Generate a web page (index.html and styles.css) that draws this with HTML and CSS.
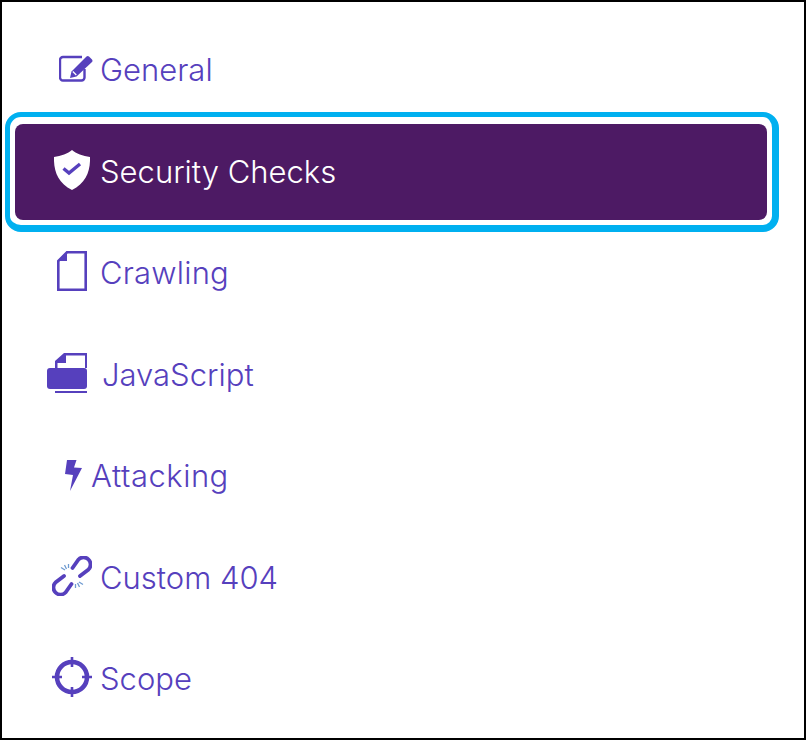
FILE: index.html
```html
<!DOCTYPE html>
<html lang="en">
<head>
    <meta charset="UTF-8">
    <title>Scan settings</title>
    <link rel="stylesheet" href="styles.css">
</head>
<body>
<nav class="side-menu">
    <a href="#" class="menu-item item-general">
        <svg class="icon" viewBox="0 0 34 27" width="34" height="27">
            <path d="M25.500 14v8.500a3 3 0 0 1-3 3H4a3 3 0 0 1-3-3V5a3 3 0 0 1 3-3h19" fill="none" stroke="#5640bd" stroke-width="2.400"/>
            <path d="M27.500 1.500a2 2 0 0 1 2.500 0l3 3a2 2 0 0 1 0 2.500L17.500 21.500l-6.500 1.500 1.500-6.500z" fill="#5640bd"/>
            <path d="M13.800 16.500l3.500 3.500" stroke="#fff" stroke-width="1.200"/>
        </svg>
        <span>General</span>
    </a>
    <div class="focus-ring">
        <a href="#" class="menu-item selected">
            <svg class="icon" viewBox="0 0 36 40" width="36" height="40">
                <path d="M18 0c4 3.500 11 6 18 7 .5 14-4 26-18 33C4 33-.5 21 0 7c7-1 14-3.500 18-7z" fill="#fff"/>
                <path d="M9.500 18.500l5.500 4.500 11-9" fill="none" stroke="#5640bd" stroke-width="3.400"/>
            </svg>
            <span>Security Checks</span>
        </a>
    </div>
    <a href="#" class="menu-item item-crawling">
        <svg class="icon" viewBox="0 0 30 40" width="30" height="40">
            <path d="M10 1.300h18.700v37.400H1.300V10z" fill="none" stroke="#5640bd" stroke-width="2.600"/>
            <path d="M10 0.500v9.500H0.500z" fill="#5640bd"/>
        </svg>
        <span>Crawling</span>
    </a>
    <a href="#" class="menu-item item-js">
        <svg class="icon" viewBox="0 0 40 40" width="40" height="40">
            <path d="M8 15V8l9-8h23v15h-2V2.500H19V10h-8.500v5z" fill="#5640bd"/>
            <rect x="0" y="15" width="40" height="21" rx="3" fill="#5640bd"/>
            <rect x="8" y="38" width="32" height="2" fill="#5640bd"/>
        </svg>
        <span>JavaScript</span>
    </a>
    <a href="#" class="menu-item item-attack">
        <svg class="icon" viewBox="0 0 17 31" width="17" height="31">
            <path d="M2 0h9.500L9 7.500l8 .5L5 31l3-16-8-1z" fill="#5640bd"/>
        </svg>
        <span>Attacking</span>
    </a>
    <a href="#" class="menu-item item-custom">
        <svg class="icon" viewBox="0 0 40 40" width="40" height="40">
            <g fill="none" stroke="#5640bd" stroke-width="3.800" stroke-linecap="round">
                <path d="M20.500 12L26.500 3.500A7 7 0 0 1 36.500 13.500L28 20"/>
                <path d="M19.500 28L13.500 36.500A7 7 0 0 1 3.500 26.500L12 20"/>
            </g>
            <path d="M9 11.500l4 2.500M12.500 9l2 4M16.500 8v4M31 28.500l-4-2.500M27.500 31l-2-4M23.500 32v-4" stroke="#6f9bd1" stroke-width="1.300"/>
        </svg>
        <span>Custom 404</span>
    </a>
    <a href="#" class="menu-item item-scope">
        <svg class="icon" viewBox="0 0 40 40" width="40" height="40">
            <circle cx="20" cy="20" r="15" fill="none" stroke="#5640bd" stroke-width="4.600"/>
            <path d="M20 0v10M20 30v10M0 20h10M30 20h10" stroke="#5640bd" stroke-width="2.600"/>
        </svg>
        <span>Scope</span>
    </a>
</nav>
</body>
</html>
```

FILE: styles.css
```css
* {
    margin: 0;
    padding: 0;
    box-sizing: border-box;
}
body {
    background-color: #fff;
    font-family: 'Inter', 'Liberation Sans', sans-serif;
}
.side-menu {
    height: 740px;
    border: 2px solid #000;
    padding: 17px 25px 0 3px;
    display: flex;
    flex-direction: column;
}
.menu-item {
    display: flex;
    align-items: center;
    height: 101.5px;
    color: #5640bd;
    font-size: 31px;
    font-weight: 300;
    text-decoration: none;
}
.menu-item .icon {
    flex: none;
    margin-bottom: 3px;
}
.item-general { padding-left: 54px; }
.item-general span { margin-left: 7px; }
.item-crawling { padding-left: 52px; }
.item-crawling span { margin-left: 13px; letter-spacing: 0.2px; }
.item-js { padding-left: 42px; }
.item-js span { margin-left: 15px; }
.item-attack { padding-left: 60px; }
.item-attack .icon { margin-bottom: 0; }
.item-attack span { margin-left: 9px; letter-spacing: 0.5px; }
.item-custom, .item-scope { padding-left: 47px; }
.item-custom span, .item-scope span { margin-left: 8px; }
.focus-ring {
    border: solid #00b0f0;
    border-width: 5px 7px 7px 5px;
    border-radius: 16px;
    padding: 7px 5px 5px;
    height: 120px;
    margin: -8.750px 0 -9.750px;
}
.menu-item.selected {
    height: 96px;
    padding-left: 39px;
    background-color: #4d1a64;
    border-radius: 8px;
    color: #fff;
}
.selected span { margin-left: 10px; }
```
